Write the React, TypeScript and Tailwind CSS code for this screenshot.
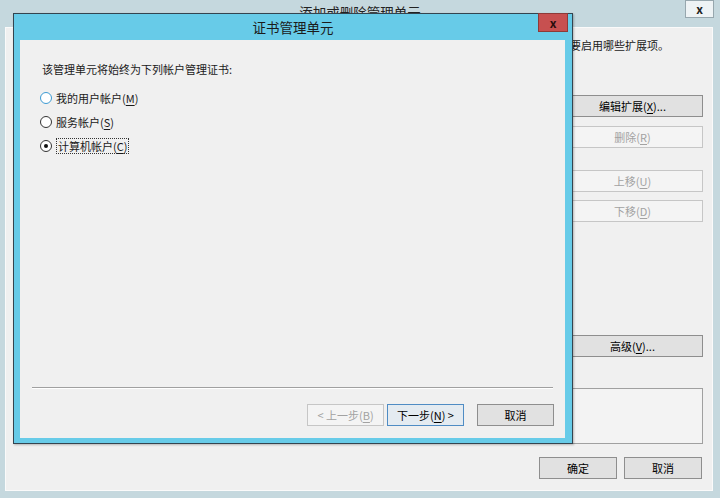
import React from "react";

const U = ({ children }: { children: React.ReactNode }) => (
  <span className="underline underline-offset-[2px]">{children}</span>
);

type BtnProps = {
  children: React.ReactNode;
  className?: string;
  variant?: "normal" | "disabled" | "default";
};

const Btn = ({ children, className = "", variant = "normal" }: BtnProps) => {
  const look =
    variant === "disabled"
      ? "border-[#c6c6c6] bg-[#f4f4f4] text-[#a2a2a2]"
      : variant === "default"
      ? "border-[#4f8cc4] bg-[#e4ebf1] text-black"
      : "border-[#8e8e8e] bg-[#e1e1e1] text-black";
  return (
    <button
      type="button"
      className={`h-[22px] flex items-center justify-center border text-[11px] leading-[14px] ${look} ${className}`}
    >
      {children}
    </button>
  );
};

const Radio = ({ checked = false, hover = false }: { checked?: boolean; hover?: boolean }) => (
  <span
    className={`w-[12px] h-[12px] rounded-full border bg-white flex items-center justify-center ${
      hover ? "border-[#3d9bd3]" : "border-[#333333]"
    }`}
  >
    {checked && <span className="w-[4px] h-[4px] rounded-full bg-[#111]" />}
  </span>
);

export default function App() {
  return (
    <div className="relative w-[720px] h-[498px] overflow-hidden bg-[#c5d8de] font-['Noto_Sans_CJK_SC',sans-serif] text-[11px] leading-[14px] text-[#1a1a1a]">
      {/* outer window: 添加或删除管理单元 */}
      <div className="relative h-[27px] flex items-center justify-center">
        <span className="-mt-[3px] text-[13.5px] text-[#222]">添加或删除管理单元</span>
        <div className="absolute right-[6px] top-0 w-[29px] h-[18px] border border-[#97a7ae] bg-[#eef3f5] flex items-center justify-center text-[12px] font-bold text-[#222]">
          x
        </div>
      </div>
      <div className="ml-[5px] mr-[7px] h-[464px] border border-[#fafafa] bg-[#f0f0f0] flex flex-col">
        <div className="pt-[10px] pr-[43px] flex justify-end">你可以配置要启用哪些扩展项。</div>
        <div className="flex">
          <div className="flex-1" />
          <div className="w-[141px] mr-[9px] flex flex-col">
            <Btn className="mt-[43px]">
              编辑扩展(<U>X</U>)...
            </Btn>
            <Btn className="mt-[9px]" variant="disabled">
              删除(<U>R</U>)
            </Btn>
            <Btn className="mt-[22px]" variant="disabled">
              上移(<U>U</U>)
            </Btn>
            <Btn className="mt-[8px]" variant="disabled">
              下移(<U>D</U>)
            </Btn>
            <Btn className="mt-[113px]">
              高级(<U>V</U>)...
            </Btn>
          </div>
        </div>
        <div className="mt-[31px] ml-[8px] mr-[9px] h-[56px] border border-[#a0a0a0] bg-[#f3f3f3]" />
        <div className="mt-[13px] mr-[10px] flex justify-end gap-[7px]">
          <Btn className="w-[78px]">确定</Btn>
          <Btn className="w-[78px]">取消</Btn>
        </div>
      </div>

      {/* modal dialog: 证书管理单元 */}
      <div className="absolute left-[13px] top-[13px] w-[560px] h-[431px] border border-[#34444f] bg-[#67cbe8] flex flex-col shadow-[1px_1px_2px_rgba(0,0,0,0.25)]">
        <div className="relative h-[26px] flex items-center justify-center">
          <span className="text-[13.5px] text-[#1b1b1b]">证书管理单元</span>
          <div className="absolute -top-[1px] right-[4px] w-[30px] h-[19px] border border-[#8e3a38] bg-[#c75050] flex items-center justify-center text-[12px] font-bold leading-none text-[#2a0c0c]">
            x
          </div>
        </div>
        <div className="flex-1 ml-[6px] mr-[7px] mb-[5px] bg-[#f0f0f0] flex flex-col">
          <div className="pt-[22px] pl-[22px]">该管理单元将始终为下列帐户管理证书:</div>
          <div className="mt-[10px] pl-[20px] flex flex-col">
            <label className="h-[24px] flex items-center gap-[4px]">
              <Radio hover />
              <span>
                我的用户帐户(<U>M</U>)
              </span>
            </label>
            <label className="h-[24px] flex items-center gap-[4px]">
              <Radio />
              <span>
                服务帐户(<U>S</U>)
              </span>
            </label>
            <label className="h-[24px] flex items-center gap-[4px]">
              <Radio checked />
              <span className="px-[1px] border border-dotted border-[#333]">
                计算机帐户(<U>C</U>)
              </span>
            </label>
          </div>
          <div className="flex-1" />
          <div className="mx-[12px] h-[2px] border-t border-[#a0a0a0] border-b border-b-white" />
          <div className="mt-[15px] mb-[12px] mr-[11px] flex justify-end">
            <Btn className="w-[77px]" variant="disabled">
              &lt; 上一步(<U>B</U>)
            </Btn>
            <Btn className="ml-[3px] w-[77px]" variant="default">
              下一步(<U>N</U>) &gt;
            </Btn>
            <Btn className="ml-[13px] w-[77px]">取消</Btn>
          </div>
        </div>
      </div>
    </div>
  );
}
